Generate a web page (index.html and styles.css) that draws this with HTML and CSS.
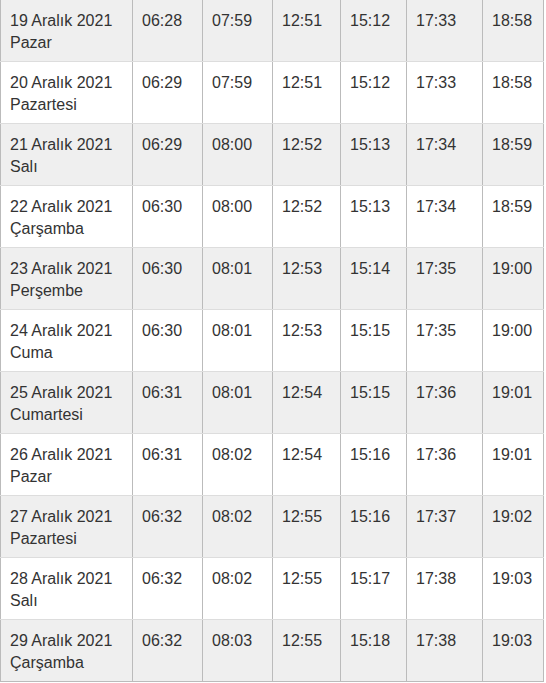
FILE: index.html
```html
<!DOCTYPE html>
<html lang="tr">
<head>
<meta charset="utf-8">
<title>İmsakiye</title>
<link rel="stylesheet" href="styles.css">
</head>
<body>
<table class="times">
<colgroup>
<col class="c-date"><col class="c-t1"><col class="c-t2"><col class="c-t3"><col class="c-t4"><col class="c-t5"><col class="c-t6">
</colgroup>
<tbody>
<tr><td>19 Aralık 2021<br>Pazar</td><td>06:28</td><td>07:59</td><td>12:51</td><td>15:12</td><td>17:33</td><td>18:58</td></tr>
<tr><td>20 Aralık 2021<br>Pazartesi</td><td>06:29</td><td>07:59</td><td>12:51</td><td>15:12</td><td>17:33</td><td>18:58</td></tr>
<tr><td>21 Aralık 2021<br>Salı</td><td>06:29</td><td>08:00</td><td>12:52</td><td>15:13</td><td>17:34</td><td>18:59</td></tr>
<tr><td>22 Aralık 2021<br>Çarşamba</td><td>06:30</td><td>08:00</td><td>12:52</td><td>15:13</td><td>17:34</td><td>18:59</td></tr>
<tr><td>23 Aralık 2021<br>Perşembe</td><td>06:30</td><td>08:01</td><td>12:53</td><td>15:14</td><td>17:35</td><td>19:00</td></tr>
<tr><td>24 Aralık 2021<br>Cuma</td><td>06:30</td><td>08:01</td><td>12:53</td><td>15:15</td><td>17:35</td><td>19:00</td></tr>
<tr><td>25 Aralık 2021<br>Cumartesi</td><td>06:31</td><td>08:01</td><td>12:54</td><td>15:15</td><td>17:36</td><td>19:01</td></tr>
<tr><td>26 Aralık 2021<br>Pazar</td><td>06:31</td><td>08:02</td><td>12:54</td><td>15:16</td><td>17:36</td><td>19:01</td></tr>
<tr><td>27 Aralık 2021<br>Pazartesi</td><td>06:32</td><td>08:02</td><td>12:55</td><td>15:16</td><td>17:37</td><td>19:02</td></tr>
<tr><td>28 Aralık 2021<br>Salı</td><td>06:32</td><td>08:02</td><td>12:55</td><td>15:17</td><td>17:38</td><td>19:03</td></tr>
<tr><td>29 Aralık 2021<br>Çarşamba</td><td>06:32</td><td>08:03</td><td>12:55</td><td>15:18</td><td>17:38</td><td>19:03</td></tr>
</tbody>
</table>
</body>
</html>
```
FILE: styles.css
```css
html, body {
  margin: 0;
  padding: 0;
  background: #fff;
}
body {
  font-family: "Liberation Sans", Arial, Helvetica, sans-serif;
  font-size: 16px;
  color: #333;
}
.times {
  border-collapse: collapse;
  table-layout: fixed;
  width: 543px;
  margin-top: -1px;
}
.c-date { width: 132px; }
.c-t1 { width: 70px; }
.c-t2 { width: 70px; }
.c-t3 { width: 68px; }
.c-t4 { width: 66px; }
.c-t5 { width: 76px; }
.c-t6 { width: 61px; }
.times td {
  vertical-align: top;
  text-align: left;
  padding: 10px 7px 7px 9px;
  line-height: 22px;
  height: 44px;
  border-left: 1px solid #bbb;
  border-right: 1px solid #bbb;
  border-top: 1px solid #ddd;
  border-bottom: 1px solid #ddd;
  white-space: nowrap;
}
.times tr:nth-child(odd) td {
  background: #efefef;
}
.times tr:last-child td {
  border-bottom-color: #bbb;
}
```
